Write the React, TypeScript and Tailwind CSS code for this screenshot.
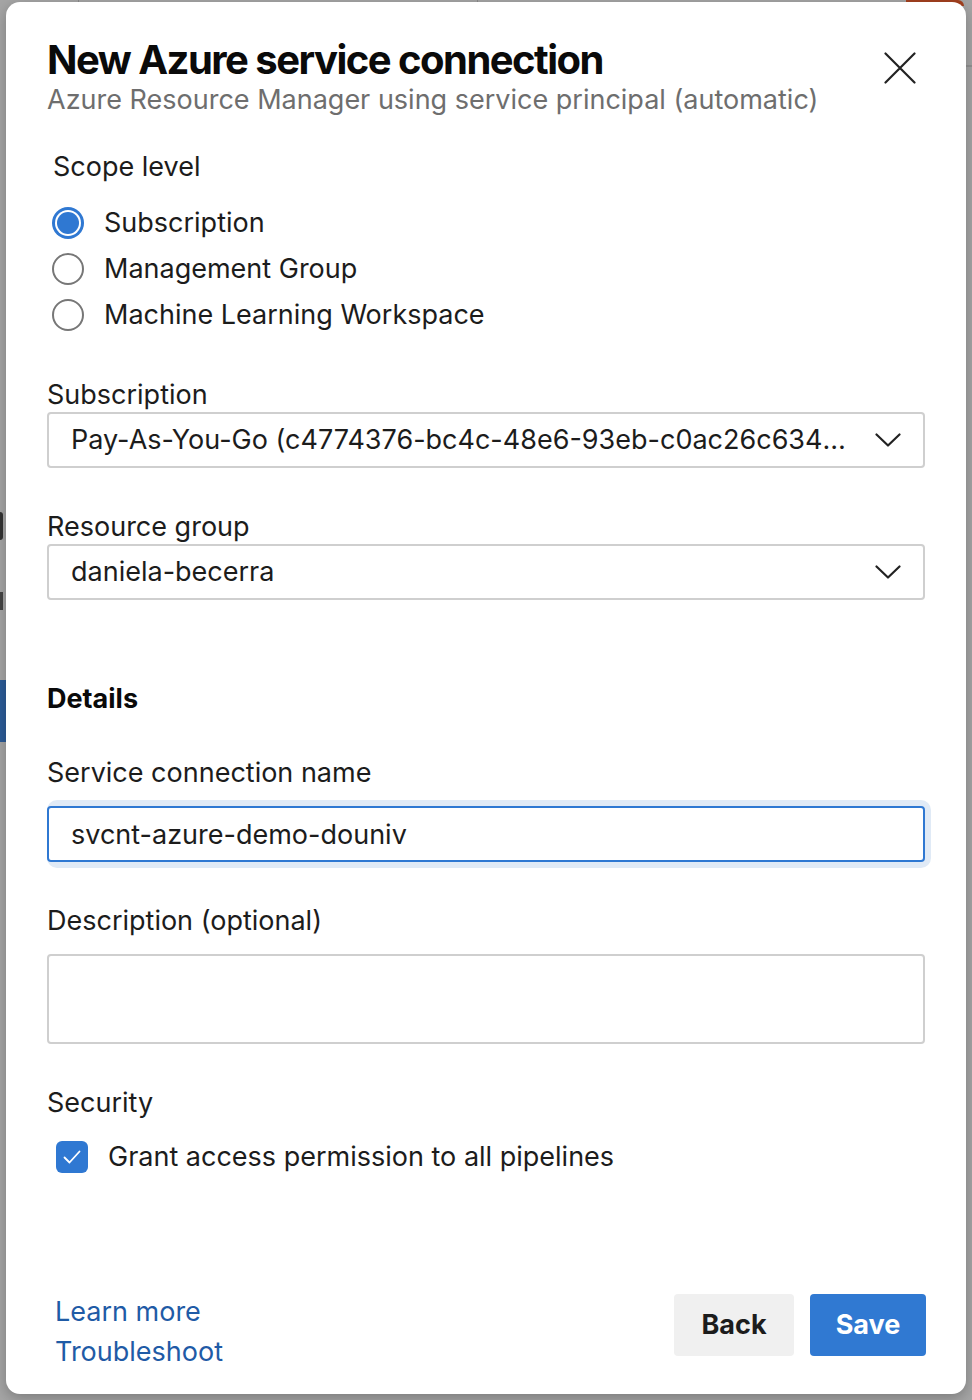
import { useState } from "react";

const font = { fontFamily: "Inter, 'Noto Sans', sans-serif" };

function Chevron() {
  return (
    <svg width="26" height="14" viewBox="0 0 26 14" fill="none" stroke="#222" strokeWidth="2.2" strokeLinecap="round" strokeLinejoin="round">
      <path d="M1.5 1.5 L13 12.5 L24.5 1.5" />
    </svg>
  );
}

function Radio({ checked, label }: { checked: boolean; label: string }) {
  return (
    <div className="flex h-[46px] items-center">
      {checked ? (
        <span className="ml-[5px] flex h-[32px] w-[32px] items-center justify-center rounded-full bg-[#2f78d2]">
          <span className="flex h-[26px] w-[26px] items-center justify-center rounded-full bg-white">
            <span className="h-[22px] w-[22px] rounded-full bg-[#2f78d2]" />
          </span>
        </span>
      ) : (
        <span className="ml-[5px] h-[32px] w-[32px] rounded-full border-[2.5px] border-[#777]" />
      )}
      <span className="ml-[20px] text-[27px] leading-[36px] text-[#1c1c1c]">{label}</span>
    </div>
  );
}

function Select({ value }: { value: string }) {
  return (
    <div className="flex h-[56px] items-center justify-between rounded-[4px] border-2 border-[#cfcfcf] pl-[22px] pr-[22px]">
      <span className="truncate text-[27px] text-[#1c1c1c]">{value}</span>
      <span className="ml-4 shrink-0">
        <Chevron />
      </span>
    </div>
  );
}

export default function App() {
  const [scope] = useState("Subscription");
  const [name, setName] = useState("svcnt-azure-demo-douniv");

  return (
    <div className="relative h-[1400px] w-[972px] overflow-hidden bg-[#a5a5a5] pt-[2px] pl-[6px]" style={font}>
      {/* dimmed page behind the dialog */}
      <div className="absolute left-[78px] top-0 h-[3px] w-[1px] bg-[#8a8a8a]" />
      <div className="absolute left-[477px] top-0 h-[3px] w-[1px] bg-[#8a8a8a]" />
      <div className="absolute right-[8px] top-0 h-[6px] w-[58px] rounded-tr-[16px] bg-[#a4401f]" />
      <div className="absolute right-0 top-[65px] h-[2px] w-[8px] bg-[#929292]" />
      <div className="absolute left-0 top-[680px] h-[62px] w-[6px] bg-[#2c5c98]" />
      <div className="absolute left-0 top-[512px] h-[28px] w-[3px] rounded-r bg-[#333]" />
      <div className="absolute left-0 top-[592px] h-[18px] w-[3px] bg-[#444]" />

      <div className="relative flex h-[1392px] w-[960px] flex-col rounded-[14px] bg-white px-[41px] pt-[36px] pb-[22px] shadow-[0_4px_14px_rgba(0,0,0,0.25)]">
        {/* Header */}
        <div className="flex items-start justify-between">
          <div>
            <h1 className="text-[40px] font-bold leading-[44px] tracking-[-0.038em] text-[#0a0a0a]">New Azure service connection</h1>
            <p className="text-[27px] leading-[36px] text-[#6e6e6e]">Azure Resource Manager using service principal (automatic)</p>
          </div>
          <button className="mr-[9px] mt-[14px]">
            <svg width="32" height="32" viewBox="0 0 32 32" stroke="#222" strokeWidth="2.2" strokeLinecap="round">
              <path d="M1.5 1.5 L30.5 30.5 M30.5 1.5 L1.5 30.5" />
            </svg>
          </button>
        </div>

        {/* Scope level */}
        <div className="ml-[6px] mt-[31px] text-[27px] leading-[36px] text-[#1c1c1c]">Scope level</div>
        <div className="mt-[15px]">
          {["Subscription", "Management Group", "Machine Learning Workspace"].map((s) => (
            <Radio key={s} checked={s === scope} label={s} />
          ))}
        </div>

        <div className="mt-[40px] text-[27px] leading-[34px] text-[#1c1c1c]">Subscription</div>
        <Select value="Pay-As-You-Go (c4774376-bc4c-48e6-93eb-c0ac26c63421)" />

        <div className="mt-[42px] text-[27px] leading-[34px] text-[#1c1c1c]">Resource group</div>
        <Select value="daniela-becerra" />

        {/* Details */}
        <div className="mt-[81px] text-[27px] font-bold leading-[36px] text-[#0a0a0a]">Details</div>
        <div className="mt-[39px] text-[27px] leading-[34px] text-[#1c1c1c]">Service connection name</div>
        <div className="-mr-[6px] mt-[10px] rounded-[10px] bg-[#e0eaf6] pt-[6px] pr-[6px] pb-[6px]">
          <input
            value={name}
            onChange={(e) => setName(e.target.value)}
            className="block h-[56px] w-full rounded-[4px] border-2 border-[#2f78d2] bg-white px-[22px] text-[27px] text-[#1c1c1c] outline-none"
          />
        </div>

        <div className="mt-[36px] text-[27px] leading-[34px] text-[#1c1c1c]">Description (optional)</div>
        <textarea className="mt-[16px] block h-[90px] w-full resize-none rounded-[4px] border-2 border-[#cfcfcf] px-[22px] py-[12px] text-[27px] outline-none" />

        {/* Security */}
        <div className="mt-[42px] text-[27px] leading-[34px] text-[#1c1c1c]">Security</div>
        <label className="mt-[19px] flex h-[36px] items-center">
          <span className="ml-[9px] flex h-[32px] w-[32px] items-center justify-center rounded-[6px] bg-[#2f78d2]">
            <svg width="18" height="14" viewBox="0 0 18 14" fill="none" stroke="white" strokeWidth="1.8" strokeLinecap="round" strokeLinejoin="round">
              <path d="M1.5 7.5 L6.5 12.5 L16.5 1.5" />
            </svg>
          </span>
          <span className="ml-[20px] text-[27px] leading-[36px] text-[#1c1c1c]">Grant access permission to all pipelines</span>
        </label>

        {/* Footer */}
        <div className="mt-auto flex items-start justify-between">
          <div className="ml-[8px] flex flex-col">
            <a className="text-[27px] leading-[40px] text-[#1f5ba6]">Learn more</a>
            <a className="text-[27px] leading-[40px] text-[#1f5ba6]">Troubleshoot</a>
          </div>
          <div className="mr-[-1px] mt-[2px] flex gap-[16px]">
            <button className="h-[62px] w-[120px] rounded-[4px] bg-[#f0f0f0] text-[27px] font-bold text-[#1c1c1c]">Back</button>
            <button className="h-[62px] w-[116px] rounded-[4px] bg-[#3079d2] text-[27px] font-bold text-white">Save</button>
          </div>
        </div>
      </div>
    </div>
  );
}
